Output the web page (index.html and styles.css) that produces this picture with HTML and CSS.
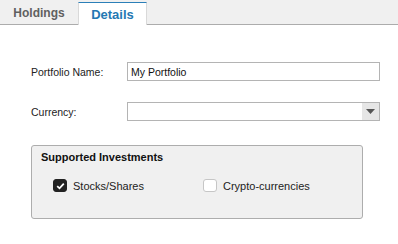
FILE: index.html
```html
<!DOCTYPE html>
<html lang="en">

<head>
    <meta charset="UTF-8" />
    <meta name="viewport" content="width=device-width, initial-scale=1.0" />
    <title>Portfolio Details</title>
    <link rel="stylesheet" href="styles.css">
</head>

<body>
    <div class="tabs">
        <div class="tab">Holdings</div>
        <div class="tab active">Details</div>
    </div>

    <div class="content">
        <div class="form-grid">
            <label class="label" for="portfolioName">Portfolio Name:</label>
            <input type="text" id="portfolioName" class="field" value="My Portfolio" />

            <label class="label" for="currency">Currency:</label>
            <div class="select">
                <span class="select-value"></span>
                <span class="select-button">
                    <svg width="9" height="5" viewBox="0 0 9 5"><path d="M0 0h9L4.5 5z" fill="#555"/></svg>
                </span>
            </div>
        </div>

        <div class="group">
            <div class="group-title">Supported Investments</div>
            <div class="options">
                <div class="option">
                    <span class="check checked">
                        <svg width="9" height="8" viewBox="0 0 9 8"><path d="M1.2 4.2 3.5 6.3 7.8 1.6" fill="none" stroke="#fff" stroke-width="1.8"/></svg>
                    </span>
                    <span>Stocks/Shares</span>
                </div>
                <div class="option">
                    <span class="check"></span>
                    <span>Crypto-currencies</span>
                </div>
            </div>
        </div>
    </div>
</body>

</html>
```

FILE: styles.css
```css
* {
    box-sizing: border-box;
    margin: 0;
    padding: 0;
}

body {
    font-family: 'Liberation Sans', Arial, sans-serif;
    background: #fff;
    color: #222;
    width: 398px;
    height: 244px;
    overflow: hidden;
}

.tabs {
    display: flex;
    height: 25px;
    background: #f0f0f0;
    border-bottom: 1px solid #acacac;
}

.tab {
    width: 78px;
    padding-top: 6px;
    text-align: center;
    font-size: 12px;
    font-weight: bold;
    color: #606060;
}

.tab.active {
    width: 69px;
    margin-top: 2px;
    margin-bottom: -1px;
    padding-top: 4px;
    background: #fff;
    border-top: 1px solid #2b7fb8;
    border-left: 1px solid #d9d9d9;
    border-right: 1px solid #d9d9d9;
    color: #2478b3;
    font-size: 13px;
}

.content {
    padding: 37px 0 0 31px;
}

.form-grid {
    display: grid;
    grid-template-columns: 96px 253px;
    row-gap: 21px;
    align-items: center;
}

.label {
    font-size: 10.5px;
    color: #222;
}

.field {
    height: 19px;
    border: 1px solid #b4b4b4;
    padding: 0 3px;
    font-family: inherit;
    font-size: 10.5px;
    color: #111;
    outline: none;
}

.select {
    display: flex;
    height: 19px;
    border: 1px solid #b4b4b4;
    background: #fff;
}

.select-value {
    flex: 1;
}

.select-button {
    width: 17px;
    background: #e6e6e6;
    display: flex;
    align-items: center;
    justify-content: center;
}

.group {
    width: 332px;
    height: 74px;
    margin-top: 24px;
    background: #f0f0f0;
    border: 1px solid #adadad;
    border-radius: 3px;
    padding: 5px 9px;
}

.group-title {
    font-size: 11px;
    font-weight: bold;
    color: #111;
}

.options {
    display: flex;
    padding: 16px 0 0 12px;
}

.option {
    display: flex;
    align-items: center;
    gap: 6px;
    font-size: 11px;
    color: #222;
    width: 154px;
}

.check {
    width: 14px;
    height: 13px;
    border: 1px solid #c6c6c6;
    border-radius: 3px;
    background: #fff;
    display: flex;
    align-items: center;
    justify-content: center;
}

.check.checked {
    background: #222;
    border-color: #222;
}
```
